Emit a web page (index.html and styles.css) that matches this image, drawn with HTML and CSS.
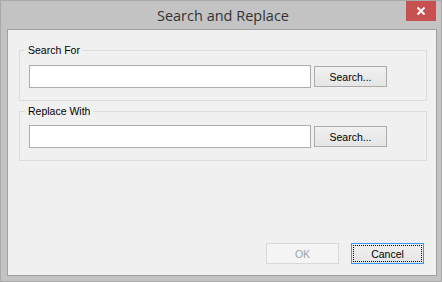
FILE: index.html
```html
<!DOCTYPE html>
<html>
<head>
<meta charset="utf-8">
<link rel="stylesheet" href="styles.css">
</head>
<body>
<div class="window">
  <div class="titlebar">
    <span class="title">Search and Replace</span>
    <div class="close"><svg width="10" height="10" viewBox="0 0 10 10"><path d="M1.5 1.5 L8.5 8.5 M8.5 1.5 L1.5 8.5" stroke="#fff" stroke-width="2"/></svg></div>
  </div>
  <div class="client">
    <fieldset class="group g1">
      <legend>Search For</legend>
      <div class="row">
        <div class="input"></div>
        <div class="btn">Search...</div>
      </div>
    </fieldset>
    <fieldset class="group g2">
      <legend>Replace With</legend>
      <div class="row">
        <div class="input"></div>
        <div class="btn">Search...</div>
      </div>
    </fieldset>
    <div class="spacer"></div>
    <div class="actions">
      <div class="btn disabled">OK</div>
      <div class="btn focused">Cancel</div>
    </div>
  </div>
</div>
</body>
</html>
```
FILE: styles.css
```css
html, body {
  margin: 0;
  padding: 0;
}
body {
  width: 442px;
  height: 282px;
  overflow: hidden;
}
.window {
  position: relative;
  box-sizing: border-box;
  width: 442px;
  height: 282px;
  border: 1px solid #a9a9a9;
  background: #c3c3c3;
  padding: 0 4px 5px 6px;
  display: flex;
  flex-direction: column;
}
.titlebar {
  height: 28px;
  display: flex;
  justify-content: center;
  align-items: center;
  flex: none;
}
.title {
  font-family: "Open Sans", "Noto Sans", sans-serif;
  font-size: 14.5px;
  color: #333;
  margin-left: 2px;
  margin-top: 1px;
}
.close {
  position: absolute;
  top: 0;
  right: 5px;
  width: 30px;
  height: 20px;
  background: #c75050;
  display: flex;
  align-items: center;
  justify-content: center;
}
.close svg { display: block; }
.client {
  flex: 1;
  border: 1px solid #a0a0a0;
  background: #f0f0f0;
  display: flex;
  flex-direction: column;
  padding: 14px 9px 11px 11px;
  font-family: "Liberation Sans", Arial, sans-serif;
  font-size: 10.5px;
  color: #000;
}
.group {
  margin: 0;
  border: 1px solid #dcdcdc;
  padding: 8px 10px 12px 9px;
  min-width: 0;
}
.g2 {
  margin-top: 4px;
  padding-top: 7px;
}
.group legend {
  padding: 0 3px;
  margin-left: -4px;
  line-height: 13px;
}
.row {
  display: flex;
  align-items: center;
  gap: 3px;
}
.input {
  box-sizing: border-box;
  width: 282px;
  height: 23px;
  border: 1px solid #abadb3;
  background: #fff;
}
.btn {
  box-sizing: border-box;
  width: 73px;
  height: 21px;
  border: 1px solid #acacac;
  background: linear-gradient(#f0f0f0, #e5e5e5);
  display: flex;
  align-items: center;
  justify-content: center;
  font-family: "Liberation Sans", Arial, sans-serif;
  font-size: 10.5px;
  color: #000;
}
.spacer { flex: 1; }
.actions {
  display: flex;
  justify-content: flex-end;
  gap: 12px;
  padding-right: 3px;
}
.btn.disabled {
  border-color: #d9d9d9;
  background: #f4f4f4;
  color: #a3a3a3;
}
.btn.focused {
  border-color: #3399ff;
  outline: 1px dotted #000;
  outline-offset: -3px;
}
```
